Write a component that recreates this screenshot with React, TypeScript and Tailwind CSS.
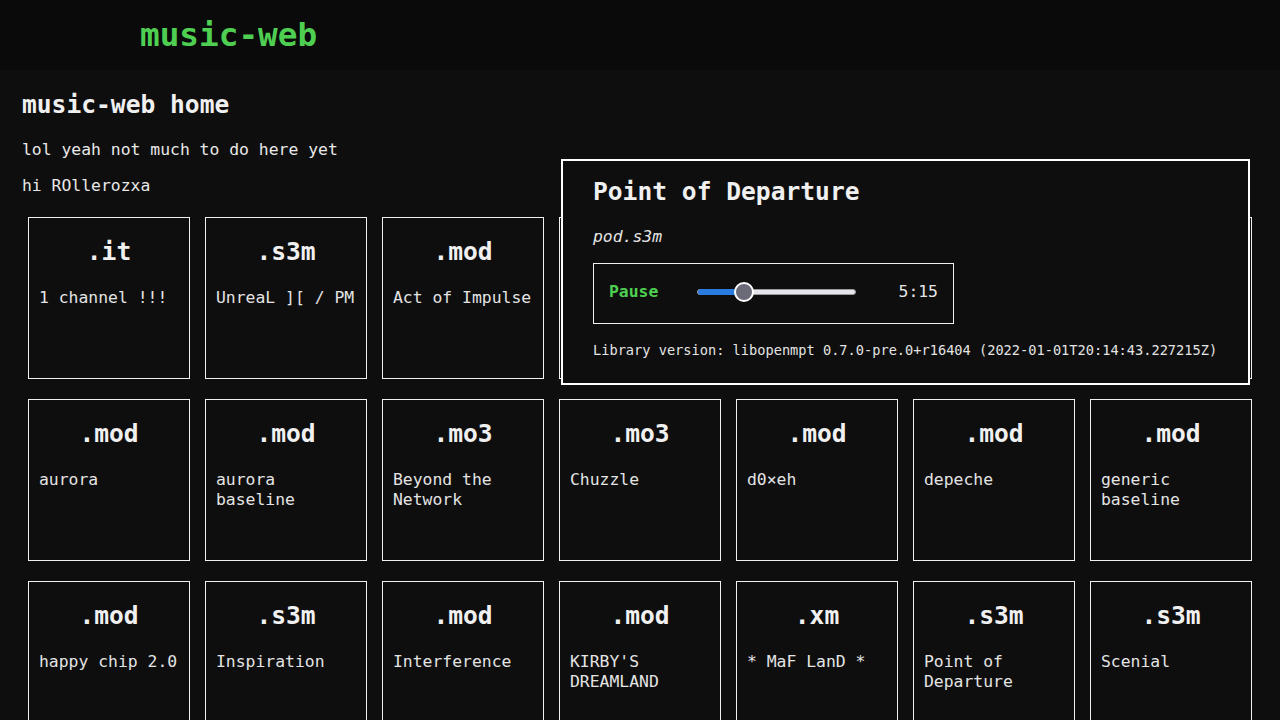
import React from "react";

type Song = { ext: string; name: string };

const songs: Song[] = [
  { ext: ".it", name: "1 channel !!!" },
  { ext: ".s3m", name: "UnreaL ][ / PM" },
  { ext: ".mod", name: "Act of Impulse" },
  { ext: ".xm", name: "Aquarium" },
  { ext: ".mod", name: "Arpeggiator" },
  { ext: ".it", name: "Astral Sea" },
  { ext: ".mod", name: "Atlantis" },
  { ext: ".mod", name: "aurora" },
  { ext: ".mod", name: "aurora baseline" },
  { ext: ".mo3", name: "Beyond the Network" },
  { ext: ".mo3", name: "Chuzzle" },
  { ext: ".mod", name: "d0×eh" },
  { ext: ".mod", name: "depeche" },
  { ext: ".mod", name: "generic baseline" },
  { ext: ".mod", name: "happy chip 2.0" },
  { ext: ".s3m", name: "Inspiration" },
  { ext: ".mod", name: "Interference" },
  { ext: ".mod", name: "KIRBY'S DREAMLAND" },
  { ext: ".xm", name: "* MaF LanD *" },
  { ext: ".s3m", name: "Point of Departure" },
  { ext: ".s3m", name: "Scenial" },
];

const mono = { fontFamily: '"DejaVu Sans Mono", "Liberation Mono", monospace' };

export default function App() {
  return (
    <div className="min-h-screen bg-[#0e0e0e] text-[#e8e8e8] relative" style={mono}>
      <header className="h-[70px] bg-[#0a0a0a] flex items-center pl-[140px]">
        <span className="text-[32.7px] leading-[40px] font-bold text-[#4fcf52]">music-web</span>
      </header>

      <main className="px-[22px] pt-[20px]">
        <h1 className="text-[24.6px] leading-[30px] font-bold text-[#f0f0f0] mb-[20px]">music-web home</h1>
        <p className="text-[16.4px] leading-[20px] mb-[16px]">lol yeah not much to do here yet</p>
        <p className="text-[16.4px] leading-[20px] mb-[21px]">hi ROllerozxa</p>

        <div className="ml-[6px] grid grid-cols-[repeat(7,162px)] gap-x-[15px] gap-y-[20px]">
          {songs.map((s, i) => (
            <div key={i} className="w-[162px] h-[162px] border border-[#f0f0f0] px-[10px] pt-[19px]">
              <div className="text-center text-[24.6px] leading-[30px] font-bold text-[#f0f0f0]">{s.ext}</div>
              <div className="mt-[21px] text-[16.4px] leading-[20px] text-[#e4e4e4] break-words">{s.name}</div>
            </div>
          ))}
        </div>
      </main>

      <div className="absolute left-[561px] top-[159px] w-[689px] h-[226px] border-2 border-white bg-[#0e0e0e] pl-[30px] pt-[15px]">
        <h2 className="mt-[1px] text-[24.6px] leading-[30px] font-bold text-[#f0f0f0]">Point of Departure</h2>
        <p className="mt-[20px] text-[16.4px] leading-[20px] italic text-[#e4e4e4]">pod.s3m</p>
        <div className="mt-[16px] w-[361px] h-[61px] border border-[#f0f0f0] flex items-center pl-[15px] pr-[15px] pb-[4px]">
          <span className="text-[16.4px] leading-[20px] font-bold text-[#4fcf52]">Pause</span>
          <div className="ml-[39px] relative w-[159px] h-[6px] rounded-full bg-[#e6e4ec] border border-[#9a9a9a]">
            <div className="absolute left-0 top-[-1px] h-[6px] w-[48px] rounded-full bg-[#2a7be0]" />
            <div className="absolute left-[36px] top-[-8px] w-[20px] h-[20px] rounded-full bg-[#6b6b78] border-2 border-white" />
          </div>
          <span className="ml-auto text-[16.4px] leading-[20px] text-[#e4e4e4]">5:15</span>
        </div>
        <p className="mt-[18px] text-[13.65px] leading-[17px] text-[#e4e4e4]">
          Library version: libopenmpt 0.7.0-pre.0+r16404 (2022-01-01T20:14:43.227215Z)
        </p>
      </div>
    </div>
  );
}
